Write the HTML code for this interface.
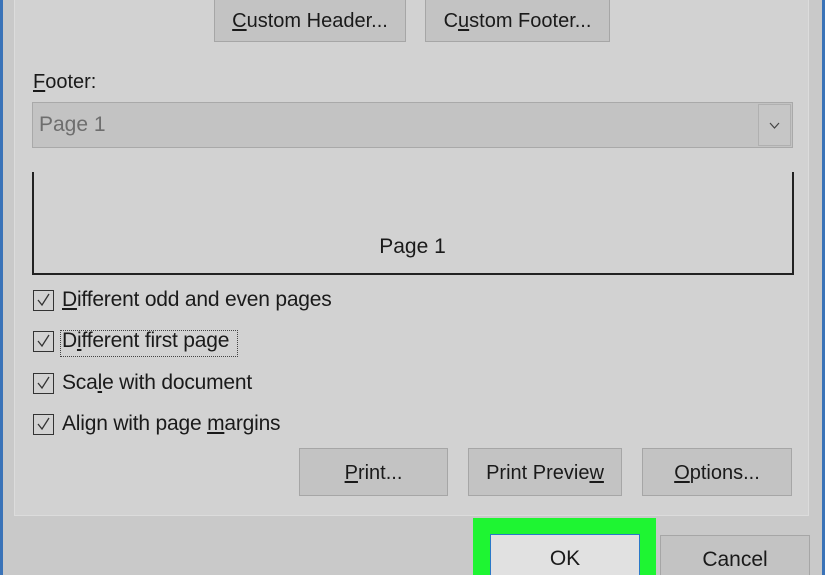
<!DOCTYPE html>
<html><head><style>
html,body{margin:0;width:825px;height:575px;overflow:hidden}
body{background:#c9c9c9;font-family:"Liberation Sans",sans-serif;color:#1a1a1a;position:relative}
div{position:absolute;box-sizing:border-box}
.btn{background:#c3c3c3;border:1px solid #a6a6a6;font-size:20px;text-align:center}
.cb{width:21px;height:21px;border:1.5px solid #333;left:33px}
.cb svg{position:absolute;left:2px;top:2px}
.lbl{left:62px;font-size:21px;letter-spacing:-0.2px}
u{text-decoration:underline;text-underline-offset:2px}
</style></head><body>
<div style="left:0;top:0;width:3px;height:575px;background:#3a73b8"></div>
<div style="left:822px;top:0;width:3px;height:575px;background:#3a73b8"></div>
<div style="left:14px;top:-2px;width:795px;height:518px;background:#d2d2d2;border:1px solid #dcdcdc"></div>
<div class="btn" style="left:214px;top:-2px;width:192px;height:44px;line-height:44px"><u>C</u>ustom Header...</div>
<div class="btn" style="left:425px;top:-2px;width:185px;height:44px;line-height:44px">C<u>u</u>stom Footer...</div>
<div style="left:33px;top:71px;font-size:20px"><u>F</u>ooter:</div>
<div style="left:32px;top:102px;width:761px;height:46px;background:#c3c3c3;border:1px solid #a9a9a9"></div>
<div style="left:39px;top:113px;font-size:21px;color:#6e6e6e">Page 1</div>
<div style="left:758px;top:104px;width:33px;height:42px;background:#c6c6c6;border:1px solid #b0b0b0"><svg width="31" height="40"><path d="M11 18 L15.5 23 L20 18" stroke="#444" stroke-width="1.2" fill="none"/></svg></div>
<div style="left:32px;top:172px;width:762px;height:103px;border:2px solid #222;border-top:none"></div>
<div style="left:0;width:825px;top:235px;text-align:center;font-size:21px">Page 1</div>

<div class="cb" style="top:290px"><svg width="15" height="15"><path d="M2 7 L6 12 L13 1" stroke="#333" stroke-width="1.3" fill="none"/></svg></div>
<div class="lbl" style="top:288px"><u>D</u>ifferent odd and even pages</div>
<div class="cb" style="top:331px"><svg width="15" height="15"><path d="M2 7 L6 12 L13 1" stroke="#333" stroke-width="1.3" fill="none"/></svg></div>
<div style="left:60px;top:330px;width:178px;height:27px;border:1px dotted #444"></div>
<div class="lbl" style="top:329px">D<u>i</u>fferent first page</div>
<div class="cb" style="top:373px"><svg width="15" height="15"><path d="M2 7 L6 12 L13 1" stroke="#333" stroke-width="1.3" fill="none"/></svg></div>
<div class="lbl" style="top:371px">Sca<u>l</u>e with document</div>
<div class="cb" style="top:414px"><svg width="15" height="15"><path d="M2 7 L6 12 L13 1" stroke="#333" stroke-width="1.3" fill="none"/></svg></div>
<div class="lbl" style="top:412px">Align with page <u>m</u>argins</div>

<div class="btn" style="left:299px;top:448px;width:149px;height:48px;line-height:48px"><u>P</u>rint...</div>
<div class="btn" style="left:468px;top:448px;width:154px;height:48px;line-height:48px">Print Previe<u>w</u></div>
<div class="btn" style="left:642px;top:448px;width:150px;height:48px;line-height:48px"><u>O</u>ptions...</div>

<div style="left:473px;top:518px;width:183px;height:57px;background:#1ef532"></div>
<div style="left:490px;top:534px;width:150px;height:50px;background:#e1e1e1;border:1px solid #2a78c8;font-size:21px;text-align:center;line-height:48px">OK</div>
<div class="btn" style="left:660px;top:535px;width:150px;height:50px;line-height:48px;font-size:21px">Cancel</div>
</body></html>
